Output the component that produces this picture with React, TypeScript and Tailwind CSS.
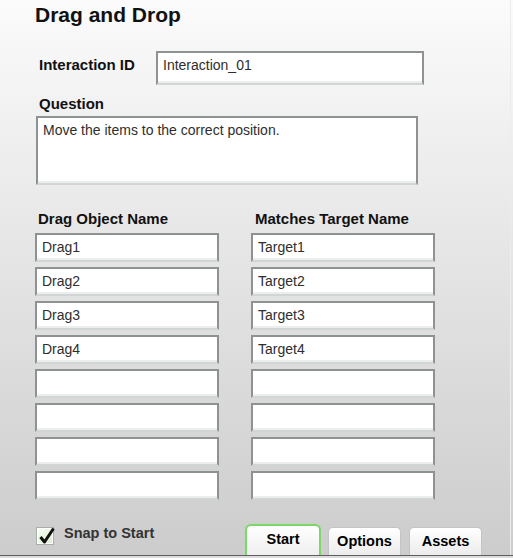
import React from "react";

const drags = ["Drag1", "Drag2", "Drag3", "Drag4", "", "", "", ""];
const targets = ["Target1", "Target2", "Target3", "Target4", "", "", "", ""];

function Field({ value, className = "" }: { value: string; className?: string }) {
    return (
        <div
            className={
                "border-2 border-[#8e9292] border-b-[#d2d5d5] bg-white shadow-[inset_0_-2px_0_#eceeee] text-[14px] leading-[16px] text-[#2e2e2e] whitespace-nowrap " +
                className
            }
        >
            {value}
        </div>
    );
}

function Tab({ label, active, className = "" }: { label: string; active?: boolean; className?: string }) {
    if (active) {
        return (
            <div className="w-[76px] h-[31px] border-2 border-b-0 border-[#7dd56c] rounded-t-[6px] bg-linear-to-b from-white to-[#efefef] shadow-[0_0_2px_#a8e69b] text-center text-[14.5px] leading-[17px] font-bold text-black pt-[5px]">
                {label}
            </div>
        );
    }
    return (
        <div
            className={
                "w-[73px] h-[28px] border border-b-0 border-[#c4c4c4] rounded-t-[5px] bg-linear-to-b from-white to-[#ececec] shadow-[inset_0_1px_0_#ffffff] text-center text-[14.5px] leading-[17px] font-bold text-black pt-[5px] " +
                className
            }
        >
            {label}
        </div>
    );
}

export default function App() {
    return (
        <div className="w-[513px] h-[558px] flex flex-col bg-linear-to-b from-[#fbfbfb] to-[#cccccc] font-['Liberation_Sans',Arial,sans-serif] overflow-hidden">
            <div className="flex-1 flex flex-col pl-[35px] pt-[3px] mr-[2px] border-r border-[#ececec]">
                <h1 className="text-[21px] leading-[24px] font-bold text-[#111]">Drag and Drop</h1>

                <div className="flex items-start mt-[24px] ml-[4px]">
                    <div className="w-[117px] mt-[5px] text-[15px] leading-[18px] font-bold text-[#111]">Interaction ID</div>
                    <Field value="Interaction_01" className="w-[268px] h-[34px] pt-[4px] pl-[5px]" />
                </div>

                <div className="mt-[10px] ml-[4px] text-[15px] leading-[18px] font-bold text-[#111]">Question</div>
                <Field
                    value="Move the items to the correct position."
                    className="mt-[3px] ml-[1px] w-[382px] h-[69px] pt-[4px] pl-[5px]"
                />

                <div className="grid grid-cols-[184px_184px] gap-x-[32px] mt-[25px]">
                    <div className="ml-[3px] text-[15px] leading-[18px] font-bold text-[#111]">Drag Object Name</div>
                    <div className="ml-[4px] text-[15px] leading-[18px] font-bold text-[#111]">Matches Target Name</div>
                    <div className="flex flex-col gap-[5px] mt-[5px]">
                        {drags.map((d, i) => (
                            <Field key={i} value={d} className="h-[29px] pt-[4px] pl-[5px]" />
                        ))}
                    </div>
                    <div className="flex flex-col gap-[5px] mt-[5px]">
                        {targets.map((t, i) => (
                            <Field key={i} value={t} className="h-[29px] pt-[4px] pl-[5px]" />
                        ))}
                    </div>
                </div>

                <div className="mt-auto flex items-start h-[31px] pr-[28px]">
                    <div className="relative mt-[3px] ml-[1px] w-[18px] h-[18px] border border-[#a9aea6] bg-linear-to-br from-[#f7fcf4] to-[#dcefd2] shadow-[inset_0_0_0_1px_#ffffff]">
                        <svg className="absolute left-[1px] top-[-2px]" width="18" height="19" viewBox="0 0 18 19">
                            <path d="M2.5 11 L6.5 16 L15.5 2.5" fill="none" stroke="#111" strokeWidth="3" strokeLinejoin="round" />
                        </svg>
                    </div>
                    <div className="ml-[10px] mt-[1px] text-[14.5px] leading-[17px] font-bold text-[#333]">Snap to Start</div>
                    <div className="ml-auto flex items-end h-full">
                        <Tab label="Start" active />
                        <Tab label="Options" className="ml-[7px]" />
                        <Tab label="Assets" className="ml-[8px]" />
                    </div>
                </div>
            </div>
            <div className="h-px bg-[#5e5e5e]" />
            <div className="h-[2px] bg-[#dcdcdc]" />
        </div>
    );
}
